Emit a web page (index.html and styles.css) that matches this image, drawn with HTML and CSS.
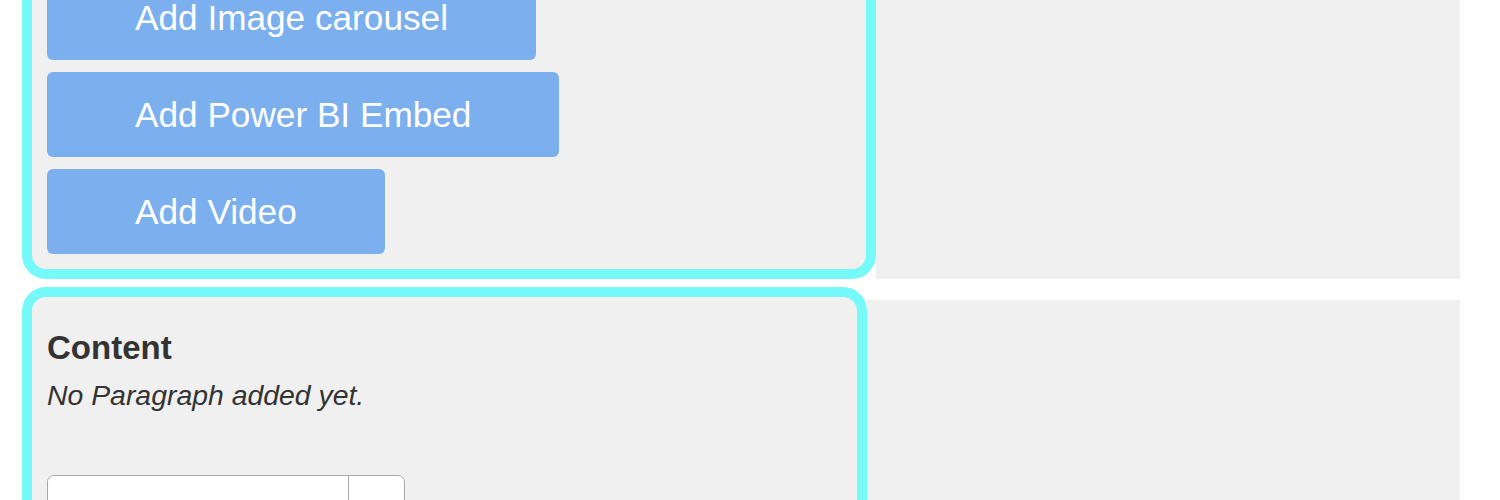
FILE: index.html
```html
<!DOCTYPE html>
<html lang="en">
<head>
  <meta charset="UTF-8">
  <title>Page Builder</title>
  <link rel="stylesheet" href="styles.css">
</head>
<body>

<div class="builder">

  <div class="row row-top">
    <div class="panel panel-tools">
      <div class="button-list">
        <button class="add-button">Add Image carousel</button>
        <button class="add-button">Add Power BI Embed</button>
        <button class="add-button">Add Video</button>
      </div>
    </div>
    <div class="side"></div>
  </div>

  <div class="row row-content">
    <div class="panel panel-content">
      <h4 class="section-title">Content</h4>
      <p class="empty-note">No Paragraph added yet.</p>
      <div class="input-group">
        <input type="text" class="input-field">
        <span class="input-addon"></span>
      </div>
    </div>
    <div class="side side-content"></div>
  </div>

</div>

</body>
</html>
```

FILE: styles.css
```css
body {
  margin: 0;
  background-color: white;
  font-family: 'Liberation Sans', Arial, sans-serif;
  color: #333333;
}

.builder {
  padding-left: 22px;
  width: 1438px;
}

.row {
  display: flex;
  align-items: stretch;
}

.row-top {
  margin-top: -50px;
}

.row-content {
  margin-top: 8px;
}

.panel {
  box-sizing: border-box;
  background-color: #f0f0f0;
  border: 10px solid #75f9f9;
  border-radius: 24px;
  padding: 15px;
}

.panel-tools {
  width: 854px;
}

.panel-content {
  width: 845px;
  height: 260px;
}

.side {
  flex: 1;
  background-color: #f0f0f0;
}

.side-content {
  margin-top: 13px;
}

.button-list {
  display: flex;
  flex-direction: column;
  align-items: flex-start;
  gap: 12px;
}

.add-button {
  height: 85px;
  padding: 0 88px;
  font-size: 35.2px;
  font-family: 'Liberation Sans', Arial, sans-serif;
  background-color: #7bafed;
  color: white;
  border: none;
  border-radius: 6px;
  cursor: pointer;
}

.section-title {
  margin: 16px 0 8px 0;
  font-size: 33px;
  line-height: 1.2;
  font-weight: bold;
}

.empty-note {
  margin: 0;
  font-size: 28.4px;
  line-height: 1.4;
  font-style: italic;
}

.input-group {
  display: flex;
  width: 358px;
  height: 50px;
  margin-top: 60px;
  background-color: white;
  border: 1.5px solid #a9a9a9;
  border-radius: 7px;
  box-sizing: border-box;
}

.input-field {
  width: 300px;
  border: none;
  border-radius: 7px 0 0 7px;
  padding: 0 10px;
  font-size: 20px;
  box-sizing: border-box;
}

.input-addon {
  flex: 1;
  border-left: 1.5px solid #a9a9a9;
}
```
